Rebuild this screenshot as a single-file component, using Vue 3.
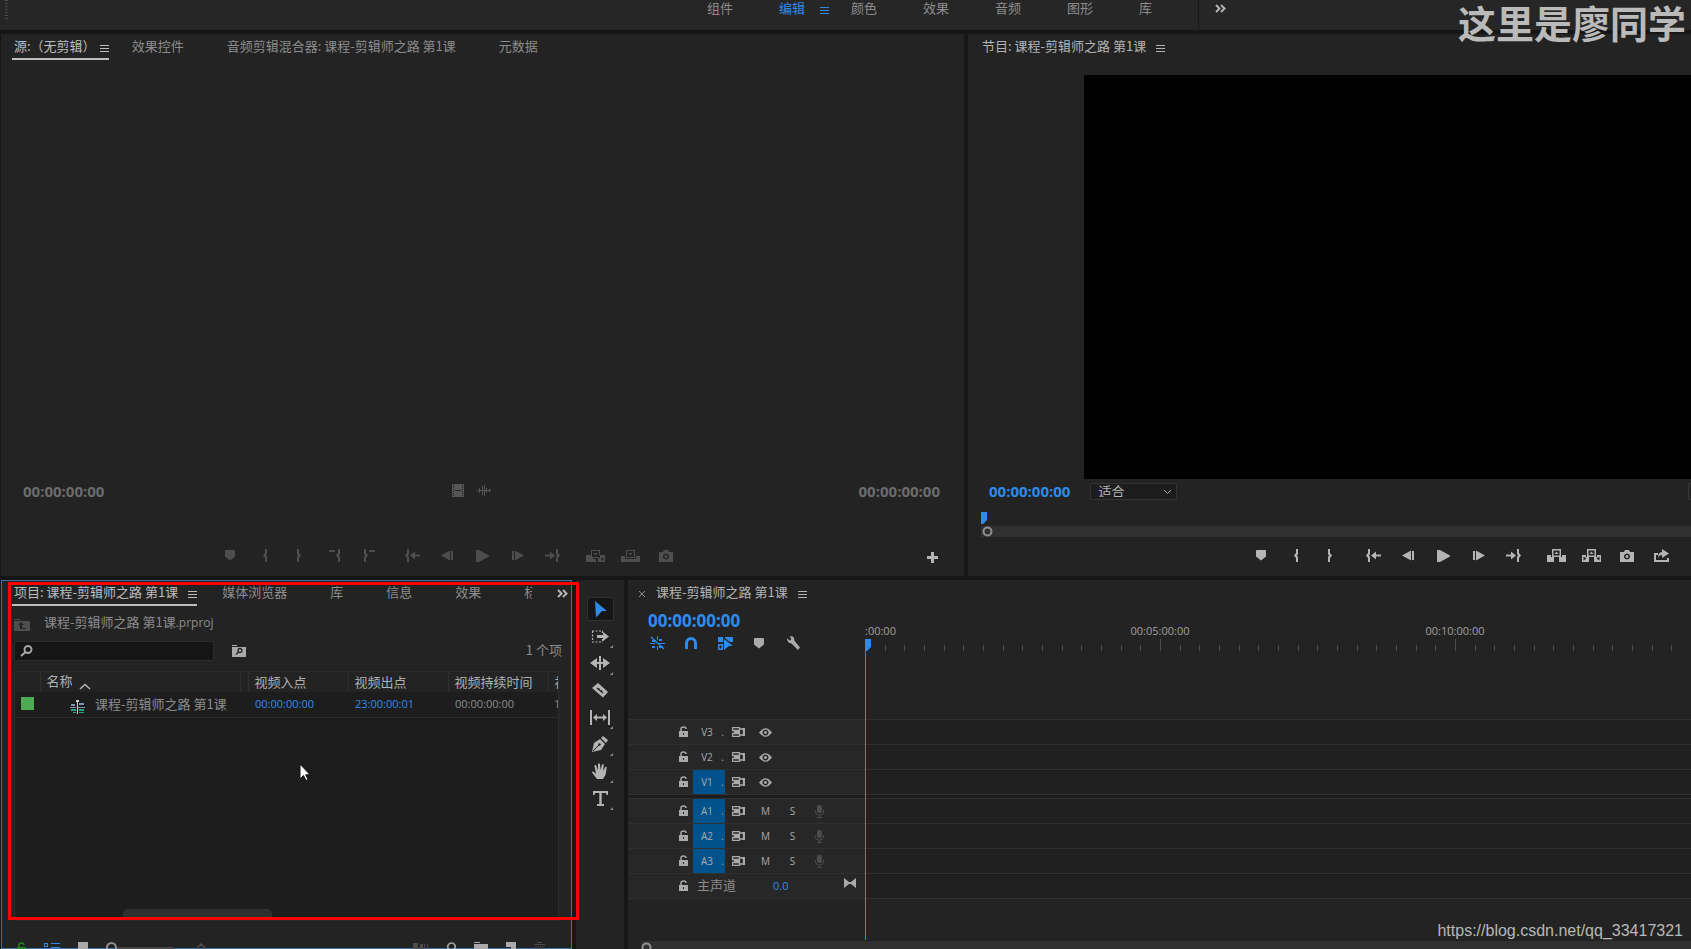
<script setup>
import { h, ref } from 'vue'

const braceL = 'h2v5l-1 1.5 1 1.5v5h-2v-4l-2-2.5 2-2.5z'
const braceR = 'h2v4l2 2.5-2 2.5v4h-2v-5l1-1.5-1-1.5z'

// name: [width, height, markup]
const icons = {
  menu: [9, 8, '<path d="M0 0h9v1H0zM0 3h9v1H0zM0 6h9v1H0z"/>'],
  more: [11, 9, '<path d="M1 1l3.500 3.500L1 8M6 1l3.500 3.500L6 8" fill="none" stroke="currentColor" stroke-width="2"/>'],
  marker: [10, 11, '<path d="M0 1q0-1 1-1h8q1 0 1 1v5.500l-5 4-5-4z"/>'],
  inPoint: [5, 13, `<path d="M3 0${braceL}"/>`],
  outPoint: [5, 13, `<path d="M0 0${braceR}"/>`],
  clipIn: [11, 13, `<path d="M0 1h6v2H0zM9 0${braceL}"/>`],
  clipOut: [11, 13, `<path d="M5 1h6v2H5zM0 0${braceR}"/>`],
  goIn: [15, 13, `<path d="M2 0${braceL}M5 6.500l5-4v3h5v2h-5v3z"/>`],
  goOut: [15, 13, `<path d="M11 0${braceR}M10 6.500l-5-4v3H0v2h5v3z"/>`],
  stepBack: [13, 11, '<path d="M0 5.500l9-5v10zM10 1h2v9h-2z"/>'],
  play: [13, 12, '<path d="M0 0h3l10 5.500v1L3 12H0z"/>'],
  stepFwd: [13, 11, '<path d="M13 5.500l-9-5v10zM1 1h2v9H1z"/>'],
  insert: [19, 12, '<path d="M0 5h4v4h6v3H0zM13 5h3v2l3-1v6h-6zM5 0h9v8H5zM6 1v6h7V1z" fill-rule="evenodd"/><path d="M0 5h5v3h2v4H0zM12 8h2V5h5v7h-7z"/><path d="M7.500 3h4L9.500 5.500z"/><path d="M15.500 7l2.500 2-2.500 2z" fill="#232323"/>'],
  overwrite: [19, 12, '<path d="M0 6h4v3h11V6h4v6H0zM5 0h9v8H5zM6 1v6h7V1z" fill-rule="evenodd"/><path d="M7.500 3h4L9.500 5.500z"/>'],
  lift: [19, 13, '<path d="M0 6h4v2h3v5H0zM12 8h3V6h4v7h-7zM5 0h9v8H5zM6.500 1.500v5h6v-5z" fill-rule="evenodd"/><path d="M7.500 5h4L9.500 2.500z"/>'],
  extract: [19, 13, '<path d="M0 6h4v2h3v5H0zM12 8h3V6h4v7h-7zM5 0h9v8H5zM6.500 1.500v5h6v-5z" fill-rule="evenodd"/><path d="M7.500 5h4L9.500 2.500z"/><path d="M1.500 7.500l3 2-3 2zM17.500 7.500l-3 2 3 2z" fill="#232323"/>'],
  camera: [14, 12, '<path d="M0 2h4l1-2h4l1 2h4v10H0zM7 3.500a3 3 0 1 0 .01 0zM7 5a1.500 1.500 0 1 1-.01 0z" fill-rule="evenodd"/>'],
  share: [16, 13, '<path d="M0 4h4v2H2v5h11V9h2v4H0zM8 0l7 4.500L8 9V6Q5 6 4 9 4 3 8 3z"/>'],
  plus: [11, 11, '<path d="M4 0h3v4h4v3H7v4H4V7H0V4h4z"/>'],
  film: [12, 13, '<path d="M0 0h12v13H0z"/><path d="M3 6h6v1H3z" fill="#232323"/><path d="M1.500 1v12M10.500 1v12" stroke="#232323" stroke-dasharray="1 1"/>'],
  wave: [14, 11, '<path d="M0 5h14v1H0zM2 3h1v5H2zM5 1h1v9H5zM7 0h1v11H7zM9 3h1v5H9zM12 4h1v3h-1z"/>'],
  binUp: [16, 12, '<path d="M0 0h6v1H0zM0 2h16v10H0z"/><path d="M4 6l3-3 3 3H8v3h4v1H6V6z" fill="#232323"/>'],
  search: [13, 12, '<path d="M8 1a3.500 3.500 0 1 1-.01 0zM5.500 7L1 11" fill="none" stroke="currentColor" stroke-width="1.800"/>'],
  binSearch: [14, 12, '<path d="M0 0h5v1H0zM0 2h14v10H0z"/><path d="M8 3.500a2 2 0 1 1-.01 0zM6.500 7L4 9.500" fill="none" stroke="#232323" stroke-width="1.400"/>'],
  caret: [12, 7, '<path d="M1 6l5-4.500L11 6" fill="none" stroke="currentColor" stroke-width="1.600"/>'],
  sequence: [15, 14, '<path d="M1 4h4v2H1zM9 3h5v2H9zM0 7h6v1H0zM8 7h7v1H8z" fill="#7d94ad"/><path d="M1 9h5v2H1zM9 9h5v2H9zM3 12h3v1H3zM9 12h5v1H9z" fill="#26a184"/><path d="M6 0h3v2H8v12H7V2H6z" fill="#ccc"/>'],
  select: [13, 18, '<path d="M1 1l12 10H8l-6 6.500z"/>'],
  trackFwd: [19, 13, '<path d="M1 1h11M1 12h11M1.500 1v11M11.500 1v3M11.500 9v3" fill="none" stroke="currentColor" stroke-width="1.200" stroke-dasharray="2 1.500"/><path d="M6 5h6V2l6 4.500L12 11V8H6z"/>'],
  ripple: [20, 14, '<path d="M9 0h2v14H9zM0 7l7-5v4h6V2l7 5-7 5V8H7v4z"/>'],
  razor: [16, 16, '<path d="M6 1l10 9-5 5.500L0 6z"/><path d="M5 6l6 5M6.500 7.500l1-1M9 9.500l1-1" stroke="#232323" stroke-width="1.400"/>'],
  slip: [20, 15, '<path d="M0 0h2v15H0zM18 0h2v15h-2zM3 7.500L7 4v2.500h6V4l4 3.500L13 11V8.500H7V11z"/>'],
  pen: [16, 16, '<path d="M0 16l2-9 6-4 5 5-4 6zM9 2l2-2 5 4-2 3z"/><path d="M1 15l6-6" stroke="#232323"/><circle cx="7.500" cy="8.500" r="1.200" fill="#232323"/>'],
  hand: [16, 17, '<path d="M5 16L0 9.500q0-1.500 2-.5l2 2L2.500 3q0-1.500 1.500-1l2 5.500L6 1q1-1.500 2 0l.5 6L10 1.500q1.200-1 1.800.3L11 8l2.200-4q1.500-.8 1.500.5L13.500 12 11 16z"/>'],
  type: [15, 15, '<path d="M0 0h15v4h-1.500L13 2H8.700v11H11v2H4v-2h2.300V2H2l-.5 2H0z"/>'],
  nest: [15, 14, '<path d="M7 0h1v4H7zM2 4h4v2H2zM9 3h3v2H9zM0 7h5v1H0zM9 7h6v1H9zM2 10h3v2H2zM9 10h4v2H9zM7 10h1v4H7z"/><path d="M1 1l13 12" stroke="currentColor" stroke-width="1.200"/>'],
  magnet: [12, 12, '<path d="M1.500 12V6a4.500 4.500 0 0 1 9 0v6" fill="none" stroke="currentColor" stroke-width="3"/>'],
  linked: [15, 13, '<path d="M0 0h5v5H0zM7 0h8v5h-3L7 1zM0 7h5v6H0zM1.500 8.500v3h2v-3zM6 2l9 7h-4l-5 4z" fill-rule="evenodd"/>'],
  wrench: [14, 14, '<path d="M1 2l2.500 2.500L5.500 3 3.500.500Q7-.5 8 2l.3 2.500L14 11.500 12 14 5.500 7.500Q1 7 1 2z"/>'],
  lock: [9, 11, '<path d="M0 5h9v6H0zM4 7v2h1V7z" fill-rule="evenodd"/><path d="M2 5V3q0-2 2.500-2T7 3" fill="none" stroke="currentColor" stroke-width="1.500"/>'],
  sync: [13, 10, '<path d="M.500.500h7v3h-7zM.500 6.500h7v3h-7zM7.500 2h4v6h-4M2 5h6" fill="none" stroke="currentColor" stroke-width="1.300"/><path d="M10 1h3v8h-2V3h-1z"/>'],
  eye: [13, 9, '<path d="M0 4.500Q6.500-4 13 4.500 6.500 13 0 4.500zM6.500 1.500a3 3 0 1 0 .01 0zM6.500 3a1.500 1.500 0 1 1-.01 0z" fill-rule="evenodd"/>'],
  mic: [9, 13, '<rect x="2" width="5" height="8" rx="2"/><path d="M.500 5v2q0 3 4 3t4-3V5M4.500 10v2.500M2 12.500h5" fill="none" stroke="currentColor"/>'],
  bowtie: [12, 10, '<path d="M0 0l5 4h2l5-4v10L7 6H5l-5 4z"/>'],
  list: [16, 12, '<path d="M0 1h4v4H0zM1 2v2h2V2zM0 8h4v4H0zM7 1h9v1H7zM7 5h9v1H7zM7 9h9v1H7z" fill-rule="evenodd"/>'],
  square: [10, 12, '<path d="M0 0h10v12H0z"/>'],
  sort: [10, 14, '<path d="M1 6l4-4 4 4M2 4v6M8 4v6" fill="none" stroke="currentColor" stroke-width="1.500"/>'],
  automate: [15, 12, '<path d="M0 1h5v11H0zM7 2h3v10H7zM11 2h1v10h-1zM14 2h1v10h-1z"/>'],
  find: [10, 13, '<path d="M5.500 1a3.700 3.700 0 1 1-.01 0zM3 7L0 12" fill="none" stroke="currentColor" stroke-width="1.600"/>'],
  bin: [14, 12, '<path d="M0 0h6v1H0zM0 2h14v10H0z"/>'],
  newItem: [10, 12, '<path d="M0 0h10v12H5V5H0z"/><path d="M0 7h3v4z"/>'],
  trash: [11, 13, '<path d="M0 2h11v1H0zM3 0h5v1H3zM1.500 4h1v9h-1zM3.700 4h1v9h-1zM6.200 4h1v9h-1zM8.500 4h1v9h-1z"/>'],
  ring: [11, 11, '<circle cx="5.500" cy="5.500" r="4" fill="none" stroke="currentColor" stroke-width="2"/>'],
  head: [6, 12, '<path d="M0 0h6v8l-4 4H0z"/>'],
  close: [6, 6, '<path d="M0 0l6 6M6 0L0 6" stroke="currentColor"/>'],
  pointer: [12, 18, '<path d="M1 1v15l3.500-3.500L7 17.500l2-1-2.300-4.700H11z" fill="#fff" stroke="#111"/>'],
}

const Icon = (props) => {
  const [w, ht, body] = icons[props.name]
  return h('svg', { width: w, height: ht, viewBox: `0 0 ${w} ${ht}`, fill: 'currentColor', 'aria-hidden': 'true', innerHTML: body })
}
Icon.props = ['name']

const sequence = '课程-剪辑师之路 第1课'
const workspaces = ['组件', '编辑', '颜色', '效果', '音频', '图形', '库']
const sourceTabs = ['源:（无剪辑）', '效果控件', `音频剪辑混合器: ${sequence}`, '元数据']
const projectTabs = [`项目: ${sequence}`, '媒体浏览器', '库', '信息', '效果', '标']

const navGroup = [['goIn', '转到入点'], ['stepBack', '后退一帧'], ['play', '播放'], ['stepFwd', '前进一帧'], ['goOut', '转到出点']]
const sourceGroups = [
  [['marker', '添加标记'], ['inPoint', '标记入点'], ['outPoint', '标记出点'], ['clipIn', '清除入点'], ['clipOut', '清除出点']],
  navGroup,
  [['insert', '插入'], ['overwrite', '覆盖'], ['camera', '导出帧']],
]
const programGroups = [
  [['marker', '添加标记'], ['inPoint', '标记入点'], ['outPoint', '标记出点']],
  navGroup,
  [['lift', '提升'], ['extract', '提取'], ['camera', '导出帧'], ['share', '导出']],
]
const tools = [
  ['select', '选择工具', false], ['trackFwd', '向前选择轨道工具', true], ['ripple', '波纹编辑工具', true], ['razor', '剃刀工具', false],
  ['slip', '外滑工具', true], ['pen', '钢笔工具', true], ['hand', '手形工具', true], ['type', '文字工具', true],
]
const timelineTools = [['nest', '嵌套', true], ['magnet', '对齐', true], ['linked', '链接选择项', true], ['marker', '添加标记', false], ['wrench', '时间轴显示设置', false]]
const tracks = [
  { name: 'V3', video: true }, { name: 'V2', video: true }, { name: 'V1', video: true, on: true },
  { name: 'A1', on: true, first: true }, { name: 'A2', on: true }, { name: 'A3', on: true },
]
const ticks = Array.from({ length: 60 }, (_, i) => ({ x: Math.round((i * 59) / 3), major: i % 15 === 0 }))
const marks = [[295, '00:05:00:00'], [590, '00:10:00:00']]

const tool = ref('select')
const query = ref('')
</script>

<template>
  <div class="app">
    <header class="workspace-bar">
      <span class="grip"></span>
      <nav class="workspaces">
        <button v-for="w in workspaces" :key="w" :class="{ active: w === '编辑' }">
          {{ w }}<Icon v-if="w === '编辑'" name="menu" class="ws-menu" />
        </button>
      </nav>
      <button class="ws-more" aria-label="更多"><Icon name="more" /></button>
    </header>

    <div class="upper">
      <section class="panel source">
        <div class="tabs">
          <button v-for="(t, i) in sourceTabs" :key="t" class="tab" :class="{ active: i === 0 }">
            <span>{{ t }}</span><Icon v-if="i === 0" name="menu" />
          </button>
        </div>
        <div class="stage"></div>
        <div class="info source-info">
          <span class="timecode">00:00:00:00</span>
          <span class="drag"><Icon name="film" /><Icon name="wave" /></span>
          <span class="timecode">00:00:00:00</span>
        </div>
        <div class="scrub"></div>
        <div class="transport dim">
          <span class="lead"></span>
          <div v-for="(g, i) in sourceGroups" :key="i" class="group">
            <button v-for="[n, l] in g" :key="n" :aria-label="l"><Icon :name="n" /></button>
          </div>
          <span class="trail"></span>
          <button class="add" aria-label="按钮编辑器"><Icon name="plus" /></button>
        </div>
      </section>

      <section class="panel">
        <div class="tabs">
          <button class="tab program-tab"><span>节目: {{ sequence }}</span><Icon name="menu" /></button>
        </div>
        <div class="stage video"></div>
        <div class="info program-info">
          <span class="timecode blue">00:00:00:00</span>
          <span class="pick">
            <select aria-label="选择缩放级别"><option>适合</option></select>
            <svg width="9" height="6" viewBox="0 0 9 6" fill="none" stroke="#aaa"><path d="M1 1l3.500 3.500L8 1" /></svg>
          </span>
          <button class="resolution" aria-label="选择回放分辨率"></button>
        </div>
        <div class="scrub">
          <Icon name="head" class="blue" />
          <div class="zoombar"><Icon name="ring" /></div>
        </div>
        <div class="transport program-transport">
          <div v-for="(g, i) in programGroups" :key="i" class="group">
            <button v-for="[n, l] in g" :key="n" :aria-label="l"><Icon :name="n" /></button>
          </div>
        </div>
      </section>
    </div>

    <div class="lower">
      <section class="panel project">
        <div class="tabs">
          <div class="tab-clip">
            <button v-for="(t, i) in projectTabs" :key="t" class="tab" :class="{ active: i === 0 }">
              <span>{{ t }}</span><Icon v-if="i === 0" name="menu" />
            </button>
          </div>
          <button class="tabs-more" aria-label="更多面板"><Icon name="more" /></button>
        </div>
        <div class="path"><Icon name="binUp" /><span>{{ sequence }}<span class="ext">.prproj</span></span></div>
        <div class="search-row">
          <label class="search"><Icon name="search" /><input v-model="query" type="text" aria-label="搜索" /></label>
          <button aria-label="从查询创建新的搜索素材箱"><Icon name="binSearch" /></button>
          <span class="count">1 个项</span>
        </div>
        <div class="list">
          <table>
            <colgroup><col class="c-label" /><col class="c-name" /><col class="c-gap" /><col class="c-time" /><col class="c-time" /><col class="c-time" /><col class="c-time" /></colgroup>
            <thead>
              <tr><th></th><th class="name-head">名称<Icon name="caret" /></th><th></th><th>视频入点</th><th>视频出点</th><th>视频持续时间</th><th>视</th></tr>
            </thead>
            <tbody>
              <tr>
                <td><span class="swatch"></span></td>
                <td class="name"><Icon name="sequence" />{{ sequence }}</td>
                <td></td>
                <td class="time blue">00:00:00:00</td>
                <td class="time blue">23:00:00:01</td>
                <td class="time">00:00:00:00</td>
                <td class="time last">1</td>
              </tr>
            </tbody>
          </table>
          <div class="thumb"></div>
        </div>
        <footer class="project-bar">
          <button class="green" aria-label="项目可写"><Icon name="lock" /></button>
          <button class="blue" aria-label="列表视图"><Icon name="list" /></button>
          <button aria-label="图标视图"><Icon name="square" /></button>
          <input type="range" min="0" max="100" value="0" aria-label="缩放" />
          <button class="faint" aria-label="排序图标"><Icon name="sort" /></button>
          <span class="fill"></span>
          <button class="faint" aria-label="自动匹配序列"><Icon name="automate" /></button>
          <button aria-label="查找"><Icon name="find" /></button>
          <button aria-label="新建素材箱"><Icon name="bin" /></button>
          <button aria-label="新建项"><Icon name="newItem" /></button>
          <button class="faint" aria-label="清除"><Icon name="trash" /></button>
        </footer>
        <Icon name="pointer" class="pointer" />
        <div class="highlight"></div>
      </section>

      <aside class="panel tools">
        <button v-for="[n, l, more] in tools" :key="n" :class="{ active: tool === n, more }" :aria-label="l" @click="tool = n"><Icon :name="n" /></button>
      </aside>

      <section class="panel timeline">
        <div class="tabs">
          <button class="close" aria-label="关闭"><Icon name="close" /></button>
          <button class="tab"><span>{{ sequence }}</span><Icon name="menu" /></button>
        </div>
        <div class="split ruler-row">
          <div>
            <div class="timecode blue big">00:00:00:00</div>
            <div class="timeline-tools">
              <button v-for="[n, l, on] in timelineTools" :key="n" :class="{ blue: on }" :aria-label="l"><Icon :name="n" /></button>
            </div>
          </div>
          <svg class="ruler" height="46">
            <text x="0" y="29">:00:00</text>
            <text v-for="[x, t] in marks" :key="t" :x="x" y="29" text-anchor="middle">{{ t }}</text>
            <rect v-for="t in ticks" :key="t.x" :x="t.x" :y="t.major ? 33 : 39" width="1" :height="t.major ? 12 : 6" />
          </svg>
        </div>
        <div v-for="t in tracks" :key="t.name" class="split track" :class="{ first: t.first }">
          <div class="head">
            <button class="lock" aria-label="切换轨道锁定"><Icon name="lock" /></button>
            <button class="target" :class="{ on: t.on }">{{ t.name }}<i>.</i></button>
            <button class="sync" aria-label="切换同步锁定"><Icon name="sync" /></button>
            <button v-if="t.video" class="cell" aria-label="切换轨道输出"><Icon name="eye" /></button>
            <template v-else>
              <button class="cell">M</button>
              <button class="cell">S</button>
              <button class="cell faint" aria-label="画外音录制"><Icon name="mic" /></button>
            </template>
          </div>
          <div class="lane"></div>
        </div>
        <div class="split track master">
          <div class="head">
            <button class="lock" aria-label="切换轨道锁定"><Icon name="lock" /></button>
            <span class="master-name">主声道</span>
            <span class="level blue">0.0</span>
            <button class="bowtie" aria-label="显示声道"><Icon name="bowtie" /></button>
          </div>
          <div class="lane"></div>
        </div>
        <div class="rest"></div>
        <div class="timeline-scroll"><Icon name="ring" /></div>
        <div class="playhead blue"><Icon name="head" /></div>
      </section>
    </div>

    <div class="brand">这里是廖同学</div>
    <div class="source-url">https://blog.csdn.net/qq_33417321</div>
  </div>
</template>

<style>
body {
  margin: 0;
  background: #161616;
}
</style>

<style scoped>
.app {
  position: relative;
  box-sizing: border-box;
  display: grid;
  grid-template-rows: 30px minmax(0, 542fr) minmax(0, 369fr);
  gap: 4px;
  height: 100vh;
  overflow: hidden;
  background: #161616;
  color: #8c8c8c;
  font: 13px/20px "Open Sans", "Noto Sans CJK SC", sans-serif;
}
svg {
  display: block;
  flex: none;
}
button {
  display: flex;
  align-items: center;
  justify-content: center;
  padding: 0;
  border: 0;
  background: none;
  color: inherit;
  font: inherit;
  white-space: nowrap;
}
.blue, .workspaces .active {
  color: #2d8ceb;
}
.green {
  color: #1c8a1c;
}
.faint {
  color: #4c4c4c;
}
.workspace-bar {
  display: flex;
  background: #262626;
}
.grip {
  width: 3px;
  height: 20px;
  margin-left: 5px;
  background: repeating-linear-gradient(#484848 0 1px, #262626 1px 3px);
}
.workspaces {
  display: flex;
  flex: 1;
  justify-content: flex-end;
  gap: 46px;
  height: 16px;
  padding-right: 46px;
}
.workspaces button {
  position: relative;
  font-family: "Noto Sans CJK SC", sans-serif;
  line-height: 16px;
}
.ws-menu {
  position: absolute;
  left: 41px;
  top: 7px;
}
.ws-more {
  width: 44px;
  margin-right: 449px;
  padding-bottom: 13px;
  border-left: 1px solid #1a1a1a;
  color: #b4b4b4;
}
.upper {
  display: grid;
  grid-template-columns: 963fr 723fr;
  gap: 4px;
  padding-left: 1px;
}
.lower {
  display: grid;
  grid-template-columns: 571fr 48px 1063fr;
  gap: 4px;
  padding-left: 1px;
}
.panel {
  position: relative;
  display: flex;
  flex-direction: column;
  min-width: 0;
  min-height: 0;
  background: #232323;
}
.tabs {
  display: flex;
  flex: none;
  height: 26px;
  padding-left: 11px;
}
.tab {
  gap: 10px;
  box-sizing: border-box;
  height: 26px;
  margin-right: 43px;
  padding-bottom: 1px;
  border-bottom: 2px solid transparent;
  font-family: "Noto Sans CJK SC", sans-serif;
}
.tab svg {
  margin-top: 6px;
}
.tab.active {
  padding-left: 2px;
  margin-right: 25px;
  border-color: #bdbdbd;
  color: #bdbdbd;
}
.source .tab.active {
  gap: 4px;
  margin-right: 23px;
}
.program-tab, .timeline .tab {
  color: #b4b4b4;
}
.program-tab {
  padding-left: 3px;
}
.stage {
  flex: 1;
}
.video {
  margin: 15px 0 0 116px;
  background: #000;
}
.info {
  display: flex;
  align-items: center;
  height: 25px;
}
.timecode {
  font-size: 15px;
  font-weight: 700;
}
.info .timecode {
  padding-bottom: 2px;
}
.source-info {
  justify-content: space-between;
  padding: 0 24px 0 22px;
  color: #6c6c6c;
}
.drag {
  display: flex;
  align-items: center;
  gap: 13px;
  margin-right: 20px;
  padding-bottom: 2px;
  color: #555;
}
.program-info {
  padding-left: 21px;
}
.pick {
  position: relative;
  margin-left: 20px;
}
.pick select {
  display: block;
  box-sizing: border-box;
  width: 87px;
  height: 17px;
  padding: 0 7px 2px;
  appearance: none;
  border: 1px solid #333;
  border-radius: 2px;
  background: #1d1d1d;
  color: #b4b4b4;
  font: 13px/14px "Noto Sans CJK SC", sans-serif;
}
.pick svg {
  position: absolute;
  right: 5px;
  top: 6px;
}
.resolution {
  width: 3px;
  height: 17px;
  margin-left: auto;
  border: 1px solid #383838;
  border-right: 0;
  border-radius: 2px 0 0 2px;
}
.scrub {
  box-sizing: border-box;
  height: 33px;
  padding: 8px 0 0 13px;
}
.zoombar {
  height: 11px;
  margin-top: 2px;
  padding-left: 1px;
  background: #303030;
  color: #929292;
}
.transport {
  display: flex;
  height: 39px;
  color: #b4b4b4;
}
.transport .group {
  display: flex;
  padding-bottom: 2px;
}
.transport .group + .group {
  margin-left: 8px;
}
.transport .group button {
  width: 35px;
}
.dim .group {
  color: #4e4e4e;
}
.lead {
  flex: 210;
}
.trail {
  flex: 242;
}
.add {
  width: 11px;
  margin-right: 26px;
  padding-top: 2px;
}
.program-transport {
  justify-content: flex-end;
  padding-right: 12px;
}

.project {
  box-shadow: inset 0 0 0 1px #3d73aa;
}
.project .tabs {
  justify-content: space-between;
}
.tab-clip {
  display: flex;
  width: 520px;
  overflow: hidden;
}
.tab-clip .tab {
  flex: none;
}
.tabs-more {
  width: 16px;
  margin-right: 2px;
  color: #b4b4b4;
}
.path {
  display: flex;
  align-items: center;
  gap: 14px;
  height: 32px;
  padding-left: 13px;
}
.path svg {
  margin-top: 6px;
  color: #4e4e4e;
}
.path span, .name, .count, th {
  font-family: "Noto Sans CJK SC", sans-serif;
}
.path .ext {
  font-family: "Open Sans", sans-serif;
  font-size: 12px;
}
.search-row {
  display: flex;
  align-items: center;
  height: 26px;
  margin-bottom: 7px;
  padding: 0 10px 0 13px;
  color: #aaa;
}
.search {
  display: flex;
  align-items: center;
  box-sizing: border-box;
  width: 200px;
  height: 20px;
  margin-right: 18px;
  padding-left: 5px;
  border: 1px solid #2c2c2c;
  border-radius: 2px;
  background: #161616;
}
.search input {
  flex: 1;
  min-width: 0;
  padding: 0 6px;
  border: 0;
  outline: 0;
  background: none;
  color: inherit;
  font: inherit;
}
.count {
  margin-left: auto;
  padding-bottom: 3px;
  color: #8c8c8c;
}
.list {
  display: flex;
  flex: 1;
  flex-direction: column;
  margin: 0 13px;
  overflow: hidden;
  box-sizing: border-box;
  border: 1px solid #2c2c2c;
  background: #1d1d1d;
}
table {
  width: 633px;
  table-layout: fixed;
  border-collapse: collapse;
}
.c-label { width: 25px; }
.c-name { width: 200px; }
.c-gap { width: 8px; }
.c-time { width: 100px; }
th, td {
  box-sizing: border-box;
  padding: 0 0 0 6px;
  text-align: left;
  white-space: nowrap;
}
th {
  height: 19px;
  padding-bottom: 2px;
  border-right: 1px solid #303030;
  background: #232323;
  color: #b0b0b0;
  font-weight: 400;
  line-height: 17px;
}
.name-head svg {
  display: inline-block;
  margin-left: 6px;
  vertical-align: -4px;
}
td {
  height: 25px;
  padding-bottom: 1px;
  border-bottom: 1px solid #2c2c2c;
}
.name svg {
  display: inline-block;
  margin: 0 10px 0 24px;
  vertical-align: -5px;
}
.time {
  padding-left: 7px;
  font-size: 11px;
}
.last {
  padding-left: 6px;
}
.swatch {
  display: block;
  width: 13px;
  height: 13px;
  background: #4cab52;
}
.thumb {
  width: 149px;
  height: 11px;
  margin: auto 0 0 108px;
  border-radius: 5px 5px 0 0;
  background: #303030;
}
.project-bar {
  display: flex;
  align-items: flex-start;
  box-sizing: border-box;
  height: 28px;
  padding: 21px 27px 0 16px;
  overflow: hidden;
  color: #aaa;
}
.project-bar button {
  margin-right: 18px;
}
.project-bar .faint {
  color: #4c4c4c;
}
.project-bar .green {
  color: #1c8a1c;
}
.project-bar .blue {
  color: #2d8ceb;
}
.project-bar button:last-child {
  margin-right: 0;
}
.project-bar input {
  width: 68px;
  height: 11px;
  margin: 0 22px 0 0;
  appearance: none;
  background: linear-gradient(#484848, #484848) 12px 5px / 56px 2px no-repeat;
}
.project-bar input::-webkit-slider-thumb {
  width: 11px;
  height: 11px;
  box-sizing: border-box;
  appearance: none;
  border: 2px solid #929292;
  border-radius: 50%;
}
.fill {
  flex: 1;
}
.pointer {
  position: absolute;
  left: 298px;
  top: 183px;
}
.highlight {
  position: absolute;
  z-index: 2;
  left: 7px;
  top: 2px;
  right: -7px;
  bottom: 29px;
  border: 3px solid #f00;
  pointer-events: none;
}

.tools {
  align-items: center;
  gap: 3px;
  padding-top: 17px;
  color: #b4b4b4;
}
.tools button {
  position: relative;
  box-sizing: border-box;
  width: 27px;
  height: 24px;
  border: 1px solid transparent;
  border-radius: 2px;
}
.tools .active {
  border-color: #303030;
  background: #161616;
  color: #2d8ceb;
}
.tools .more::after {
  content: "";
  position: absolute;
  right: 0;
  bottom: -1px;
  border-bottom: 3px solid #8c8c8c;
  border-left: 3px solid transparent;
}

.timeline .tabs {
  gap: 11px;
}
.close {
  padding-top: 2px;
}
.split {
  display: grid;
  grid-template-columns: 237px minmax(0, 1fr);
}
.ruler-row {
  height: 113px;
}
.timecode.big {
  padding-left: 20px;
  font-size: 17px;
  line-height: 30px;
}
.timeline-tools {
  display: flex;
  height: 14px;
  padding-left: 12px;
}
.timeline-tools button {
  width: 34px;
}
.timeline-tools button:not(.blue) {
  color: #aaa;
}
.ruler {
  width: 100%;
  font-size: 11px;
  fill: #a0a0a0;
}
.ruler rect {
  fill: #4c4c4c;
}
.track {
  height: 24px;
  border-top: 1px solid #303030;
}
.track.first {
  margin-top: 4px;
  box-shadow: 0 -3px #1d1d1d, 0 -4px #303030;
}
.head {
  display: flex;
  align-items: center;
  background: #272727;
  color: #aaa;
}
.lane {
  background: #202020;
}
.lock {
  width: 9px;
  margin-left: 51px;
  padding-bottom: 2px;
}
.target {
  position: relative;
  width: 32px;
  height: 24px;
  margin-left: 5px;
  padding-right: 4px;
  font-size: 10px;
}
.target i {
  position: absolute;
  right: 1px;
  font-style: normal;
}
.target.on {
  background: #00528c;
}
.sync {
  width: 27px;
}
.cell {
  width: 27px;
  font-size: 10px;
}
.head .faint {
  color: #4c4c4c;
}
.master {
  border-bottom: 1px solid #303030;
}
.master-name {
  margin-left: 9px;
  padding-bottom: 2px;
  font-family: "Noto Sans CJK SC", sans-serif;
  color: #8c8c8c;
}
.level {
  margin-left: 37px;
  font-size: 11px;
}
.bowtie {
  margin: 0 9px 6px auto;
}
.rest {
  flex: 1;
}
.timeline-scroll {
  height: 8px;
  margin-left: 13px;
  overflow: hidden;
  padding-top: 1px;
  box-sizing: border-box;
  background: #303030;
  color: #929292;
}
.playhead {
  position: absolute;
  left: 237px;
  top: 59px;
  bottom: 9px;
  border-left: 1px solid #2d8ceb;
}
.playhead svg {
  margin-left: -1px;
}

.brand {
  position: absolute;
  right: 5px;
  top: 0;
  color: #bababa;
  font: 700 38px/44px "Noto Sans CJK SC", sans-serif;
}
.source-url {
  position: absolute;
  right: 8px;
  bottom: 8px;
  color: #b8b8b8;
  font: 16px/20px "Liberation Sans", sans-serif;
}
</style>
